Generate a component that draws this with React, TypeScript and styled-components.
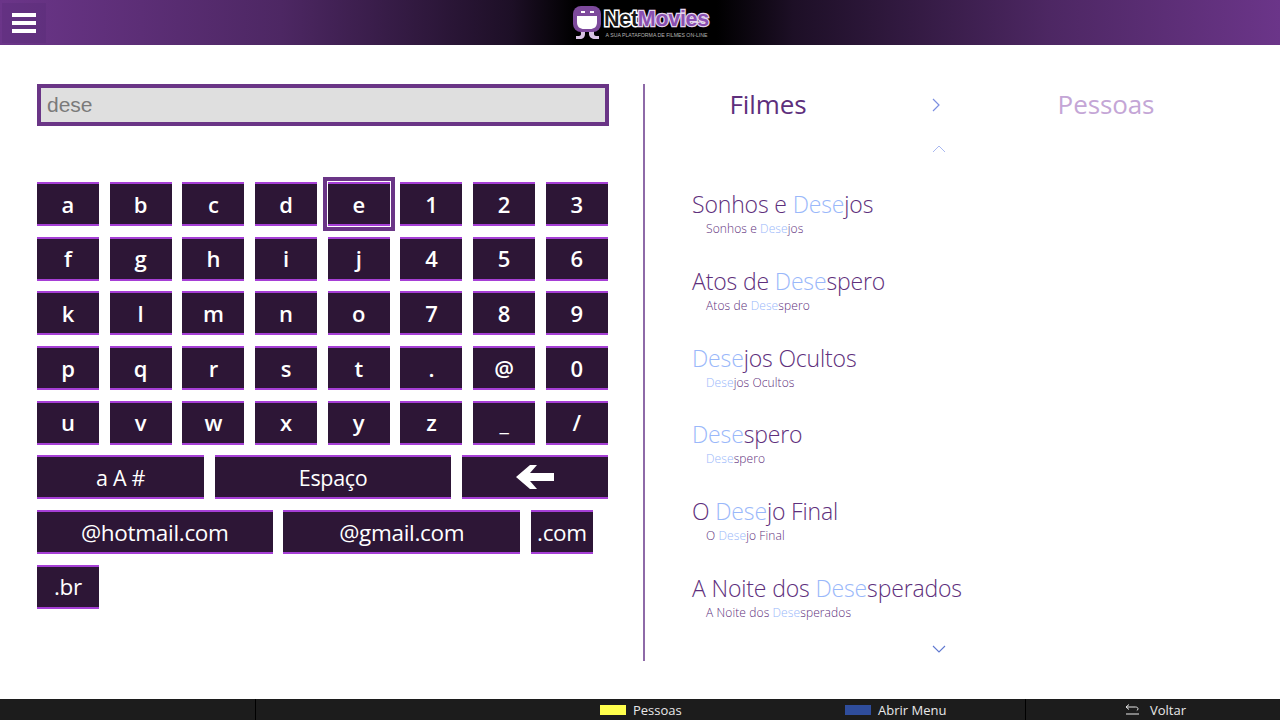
import React, { FC } from "react"
import styled, { createGlobalStyle } from "styled-components"

const GlobalStyle = createGlobalStyle`
  html, body {
    margin: 0;
    padding: 0;
    width: 1280px;
    height: 720px;
    overflow: hidden;
    background: #fff;
    font-family: "Open Sans", "Noto Sans", sans-serif;
  }
  * { box-sizing: border-box; }
`

const KEY_ROWS = [
  ["a", "b", "c", "d", "e", "1", "2", "3"],
  ["f", "g", "h", "i", "j", "4", "5", "6"],
  ["k", "l", "m", "n", "o", "7", "8", "9"],
  ["p", "q", "r", "s", "t", ".", "@", "0"],
  ["u", "v", "w", "x", "y", "z", "_", "/"],
]

const MOVIES = [
  { before: "Sonhos e ", match: "Dese", after: "jos" },
  { before: "Atos de ", match: "Dese", after: "spero" },
  { before: "", match: "Dese", after: "jos Ocultos" },
  { before: "", match: "Dese", after: "spero" },
  { before: "O ", match: "Dese", after: "jo Final" },
  { before: "A Noite dos ", match: "Dese", after: "sperados" },
]

const Logo: FC = () => (
  <LogoWrap>
    <svg width="30" height="36" viewBox="0 0 30 36">
      <path
        d="M7 9h6v20c0 3-2 5-5 5H4v-3h3c1 0 2-1 2-2zM17 24h5v5c0 1 1 2 2 2h3v3h-4c-3 0-6-2-6-5z"
        fill="#d9c4e4"
      />
      <rect x="1" y="1" width="28" height="26" rx="8" fill="#7d4a9c" />
      <path d="M5 11h20v6c0 5-3 7-7 7h-6c-4 0-7-2-7-7z" fill="#fff" />
      <rect x="9" y="6" width="4" height="2" fill="#fff" />
      <rect x="18" y="6" width="4" height="2" fill="#fff" />
    </svg>
    <LogoText>
      <LogoName>
        <LogoNet>Net</LogoNet>
        <LogoMovies>Movies</LogoMovies>
      </LogoName>
      <LogoTag>A SUA PLATAFORMA DE FILMES ON-LINE</LogoTag>
    </LogoText>
  </LogoWrap>
)

const App: FC = () => (
  <Page>
    <GlobalStyle />
    <Header>
      <MenuButton>
        <MenuLine />
        <MenuLine />
        <MenuLine />
      </MenuButton>
      <Logo />
    </Header>

    <Main>
      <KeyboardPane>
        <SearchBox>dese</SearchBox>
        <Keyboard>
          {KEY_ROWS.map((row) => (
            <KeyRow key={row[0]}>
              {row.map((k) => (
                <Key key={k} $focused={k === "e"}>
                  {k}
                </Key>
              ))}
            </KeyRow>
          ))}
          <KeyRow>
            <WideKey $width={167.3} $size={21.5}>a A #</WideKey>
            <WideKey $width={236.3} $size={21.5}>Espaço</WideKey>
            <WideKey $width={146} $size={21.5}>
              <svg width="40" height="26" viewBox="0 0 40 26">
                <path d="M1 13 15 1h7l-7 8h24v8H15l7 8h-7z" fill="#fff" />
              </svg>
            </WideKey>
          </KeyRow>
          <KeyRow>
            <WideKey $width={235.6} $size={22.5}>@hotmail.com</WideKey>
            <WideKey $width={237} $size={22.5}>@gmail.com</WideKey>
            <WideKey $width={62} $size={22.5}>.com</WideKey>
          </KeyRow>
          <KeyRow>
            <WideKey $width={62} $size={22.5}>.br</WideKey>
          </KeyRow>
        </Keyboard>
      </KeyboardPane>

      <ResultsPane>
        <Tabs>
          <Tab $active>Filmes</Tab>
          <TabArrow>
            <svg width="10" height="16" viewBox="0 0 10 16">
              <path d="M2 2l6 6-6 6" fill="none" stroke="#7c8fe0" strokeWidth="1.2" />
            </svg>
          </TabArrow>
          <Tab>Pessoas</Tab>
        </Tabs>
        <ScrollArrow>
          <svg width="14" height="8" viewBox="0 0 14 8">
            <path d="M1 7l6-6 6 6" fill="none" stroke="#a9b8f0" strokeWidth="1" />
          </svg>
        </ScrollArrow>
        <MovieList>
          {MOVIES.map((m) => (
            <MovieItem key={m.before + m.after}>
              <MovieTitle>
                {m.before}
                <Match>{m.match}</Match>
                {m.after}
              </MovieTitle>
              <MovieSub>
                {m.before}
                <Match>{m.match}</Match>
                {m.after}
              </MovieSub>
            </MovieItem>
          ))}
        </MovieList>
        <ScrollArrowBottom>
          <svg width="14" height="8" viewBox="0 0 14 8">
            <path d="M1 1l6 6 6-6" fill="none" stroke="#5f78d0" strokeWidth="1.1" />
          </svg>
        </ScrollArrowBottom>
      </ResultsPane>
    </Main>

    <Footer>
      <FooterCell />
      <FooterHints>
        <Hint $width={245}>
          <Swatch $color="#ffff4d" />
          Pessoas
        </Hint>
        <Hint>
          <Swatch $color="#2f4d9c" />
          Abrir Menu
        </Hint>
      </FooterHints>
      <BackCell>
        <svg width="15" height="11" viewBox="0 0 15 11">
          <path d="M4 .5 1 3l3 2.500M1 3h9.500c1.500 0 2.500.7 2.500 1.800 0 .8-.5 1.400-1.200 1.700M1 10h13" fill="none" stroke="#e8e8e8" strokeWidth="1" />
        </svg>
        Voltar
      </BackCell>
    </Footer>
  </Page>
)

const Page = styled.div`
  width: 1280px;
  height: 720px;
  display: flex;
  flex-direction: column;
  background: #fff;
`

const Header = styled.header`
  position: relative;
  height: 45px;
  flex: none;
  display: flex;
  align-items: center;
  justify-content: center;
  background: linear-gradient(
    90deg,
    #6b3589 0%,
    #4d2763 22%,
    #1d0f26 40%,
    #000 45%,
    #000 56%,
    #1d0f26 62%,
    #4d2763 82%,
    #6b3589 100%
  );
`

const MenuButton = styled.div`
  position: absolute;
  left: 2px;
  top: 3px;
  width: 44px;
  height: 40px;
  padding-left: 10px;
  display: flex;
  flex-direction: column;
  justify-content: center;
  gap: 4px;
  background: rgba(80, 40, 110, 0.25);
`

const MenuLine = styled.div`
  width: 24px;
  height: 4px;
  background: #fff;
`

const LogoWrap = styled.div`
  display: flex;
  align-items: flex-start;
  gap: 2px;
  margin-left: 1px;
  height: 40px;
  margin-top: 5px;
`

const LogoText = styled.div`
  display: flex;
  flex-direction: column;
  align-items: center;
`

const LogoName = styled.div`
  font-family: "Liberation Sans", Arial, sans-serif;
  font-weight: 700;
  font-size: 21.5px;
  line-height: 23px;
  letter-spacing: -0.3px;
  margin-top: 3px;
`

const LogoNet = styled.span`
  color: #1a1a1a;
  -webkit-text-stroke: 3px #fff;
  paint-order: stroke fill;
`

const LogoMovies = styled.span`
  color: #8a4fb0;
  -webkit-text-stroke: 2.500px #e4d4ee;
  paint-order: stroke fill;
`

const LogoTag = styled.div`
  font-family: "Liberation Sans", Arial, sans-serif;
  font-size: 5.2px;
  line-height: 8px;
  color: #b5b5b5;
  white-space: nowrap;
`

const Main = styled.main`
  flex: 1;
  display: flex;
  padding-top: 39px;
  min-height: 0;
`

const KeyboardPane = styled.section`
  width: 645px;
  height: 577px;
  padding-left: 37px;
  border-right: 2px solid #8e6aa8;
`

const SearchBox = styled.div`
  width: 572px;
  height: 42px;
  border: 4px solid #6a3586;
  background: #dfdfdf;
  color: #7a7a7a;
  font-family: "Liberation Sans", Arial, sans-serif;
  font-size: 21px;
  line-height: 34px;
  padding-left: 6px;
`

const Keyboard = styled.div`
  margin-top: 56px;
  display: flex;
  flex-direction: column;
  gap: 10.700px;
`

const KeyRow = styled.div`
  display: flex;
  gap: 10.700px;
`

const KeyBase = styled.div`
  height: 44px;
  flex: none;
  display: flex;
  align-items: center;
  justify-content: center;
  background: #2d1636;
  color: #fff;
  border-top: 2px solid #a63fd6;
  border-bottom: 2px solid #a63fd6;
`

const Key = styled(KeyBase)<{ $focused?: boolean }>`
  position: relative;
  width: 62px;
  font-size: 22px;
  font-weight: 600;
  padding-bottom: 1px;
  ${(p) =>
    p.$focused &&
    `
    outline: 1px solid #fff;
    outline-offset: 0;
    box-shadow: 0 0 0 5px #6a3586;
  `}
`

const WideKey = styled(KeyBase)<{ $width: number; $size: number }>`
  width: ${(p) => p.$width}px;
  font-size: ${(p) => p.$size}px;
  letter-spacing: -0.3px;
`

const ResultsPane = styled.section`
  position: relative;
  flex: 1;
  height: 577px;
`

const Tabs = styled.div`
  height: 39px;
  display: flex;
  align-items: center;
`

const Tab = styled.div<{ $active?: boolean }>`
  width: 246px;
  flex: none;
  text-align: center;
  font-size: 26px;
  letter-spacing: -0.1px;
  color: ${(p) => (p.$active ? "#5e2f7c" : "#c4a6d6")};
  margin-left: ${(p) => (p.$active ? "0" : "42px")};
`

const TabArrow = styled.div`
  margin: 2px 0 0 40px;
  width: 10px;
  display: flex;
`

const ScrollArrow = styled.div`
  height: 8px;
  margin: 22px 0 0 287px;
  display: flex;
`

const MovieList = styled.ul`
  list-style: none;
  margin: 35px 0 0 47px;
  padding: 0;
`

const MovieItem = styled.li`
  height: 76.8px;
  color: #5e2f7c;
`

const MovieTitle = styled.div`
  font-size: 23px;
  line-height: 32px;
  letter-spacing: -0.15px;
  font-weight: 300;
`

const MovieSub = styled.div`
  font-size: 12px;
  line-height: 18px;
  letter-spacing: 0.1px;
  padding-left: 14px;
  font-weight: 300;
`

const Match = styled.span`
  color: #9ab8fa;
`

const ScrollArrowBottom = styled.div`
  position: absolute;
  left: 287px;
  top: 561px;
  display: flex;
`

const Footer = styled.footer`
  height: 21px;
  flex: none;
  display: flex;
  background: #1c1c1c;
  color: #e8e8e8;
  font-size: 13px;
`

const FooterCell = styled.div`
  width: 256px;
  border-right: 1px solid #000;
`

const FooterHints = styled.div`
  width: 770px;
  padding-left: 344px;
  display: flex;
  align-items: center;
  border-right: 1px solid #000;
`

const Hint = styled.div<{ $width?: number }>`
  display: flex;
  align-items: center;
  gap: 7px;
  width: ${(p) => (p.$width ? `${p.$width}px` : "auto")};
`

const Swatch = styled.div<{ $color: string }>`
  width: 26px;
  height: 10px;
  background: ${(p) => p.$color};
`

const BackCell = styled.div`
  flex: 1;
  display: flex;
  align-items: center;
  gap: 10px;
  padding-left: 99px;
`

export default App
